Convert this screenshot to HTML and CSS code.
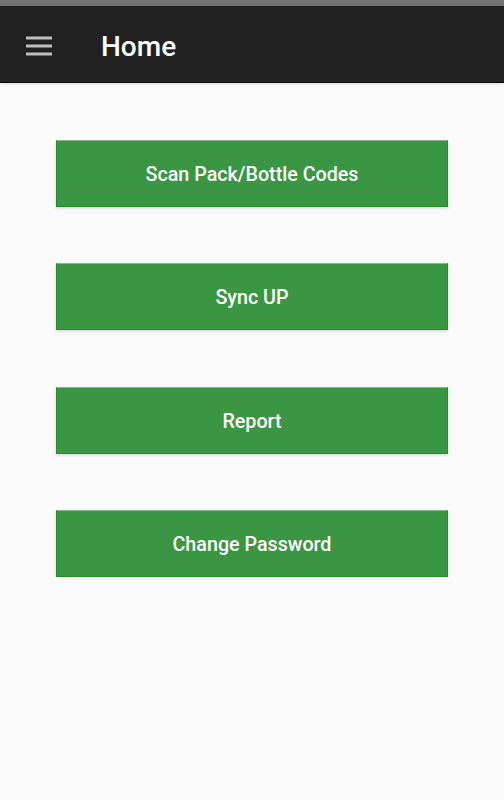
FILE: index.html
```html
<!DOCTYPE html>
<html lang="en-US">
	<head>
		<meta charset="utf-8" name="viewport" content="width=device-width, initial-scale=1">
		<title>Home</title>
		<link rel="stylesheet" href="styles.css">
	</head>
	<body>
		<div class="status-bar"></div>
		<div class="toolbar">
			<svg class="toolbar-menu" width="28" height="22" viewBox="0 0 28 22">
				<line x1="1" y1="3" x2="27" y2="3"></line>
				<line x1="1" y1="11" x2="27" y2="11"></line>
				<line x1="1" y1="19" x2="27" y2="19"></line>
			</svg>
			<p class="toolbar-title">Home</p>
		</div>
		<div class="home-buttons">
			<button class="home-button">Scan Pack/Bottle Codes</button>
			<button class="home-button">Sync UP</button>
			<button class="home-button">Report</button>
			<button class="home-button">Change Password</button>
		</div>
	</body>
</html>
```
FILE: styles.css
```css
body {
	margin: 0;
	background: #fafafa;
	font-family: Roboto, "Liberation Sans", sans-serif;
}
.status-bar {
	height: 6px;
	background: #757575;
}
.toolbar {
	height: 73px;
	background: #212121;
	border-bottom: 1px solid #0a0a0a;
	display: flex;
	align-items: center;
	padding: 3px 0 0 25px;
	box-shadow: 0 1px 3px rgba(0, 0, 0, 0.15);
}
.toolbar-menu {
	fill: none;
	stroke: #bdbdbd;
	stroke-width: 3;
}
.toolbar-title {
	margin: 2px 0 0 48px;
	color: #ffffff;
	font-size: 28px;
	font-weight: 500;
}
.home-buttons {
	display: flex;
	flex-direction: column;
	gap: 56.4px;
	padding: 57px 56px 0;
}
.home-button {
	height: 67px;
	padding-top: 3px;
	background: #3a9642;
	border: 1px solid #1e8e26;
	border-top-color: #8fb592;
	color: #ffffff;
	font-family: inherit;
	font-size: 19.7px;
	font-weight: 500;
	box-shadow: 0 1px 3px rgba(0, 0, 0, 0.16);
}
```
